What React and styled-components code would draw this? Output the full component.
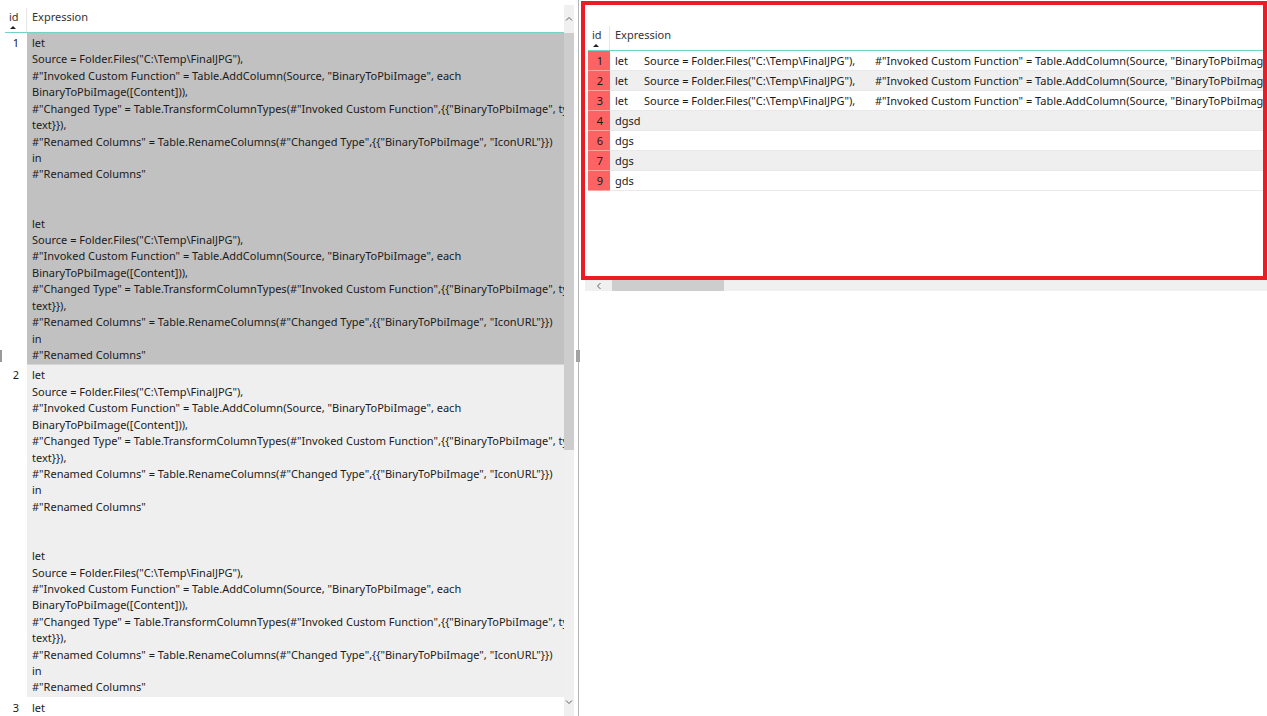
import React from 'react';
import styled, { createGlobalStyle } from 'styled-components';

const FONT = '"Noto Sans", "Open Sans", sans-serif';

const GlobalStyle = createGlobalStyle`
  html, body { margin: 0; padding: 0; background: #fff; }
  body { font-family: ${FONT}; font-size: 11px; color: #1b1b1b; }
  #root { width: 1267px; height: 716px; }
`;

const Page = styled.div`
  display: flex;
  width: 1267px;
  height: 716px;
  overflow: hidden;
  background: #fff;
`;

const LeftPane = styled.div`
  position: relative;
  display: flex;
  width: 574px;
  flex-shrink: 0;
  padding: 5px 0 0 5px;
  box-sizing: border-box;
`;

const EdgeMark = styled.div`
  position: absolute;
  left: 0;
  top: 350px;
  width: 2px;
  height: 12px;
  background: #9a9a9a;
`;

const Grid = styled.div`
  display: flex;
  flex-direction: column;
  width: ${(p) => p.$w || 'auto'};
  flex: ${(p) => (p.$w ? '0 0 auto' : '1 1 auto')};
  min-width: 0;
  overflow: hidden;
`;

const HeaderRow = styled.div`
  display: grid;
  grid-template-columns: 22px 1fr;
  height: 27px;
  flex-shrink: 0;
  border-bottom: 1px solid #72d3c6;
`;

const HeadCell = styled.div`
  display: flex;
  flex-direction: column;
  padding-left: ${(p) => p.$pl}px;
  border-right: ${(p) => (p.$divider ? '1px solid #e6e6e6' : 'none')};
  margin-top: ${(p) => (p.$divider ? '3px' : '0')};
  padding-top: ${(p) => (p.$divider ? '1px' : '4px')};
  color: #333;
  white-space: nowrap;
`;

const HeadLabel = styled.span`
  line-height: 16px;
  height: 16px;
`;

const SortArrow = styled.span`
  width: 0;
  height: 0;
  margin: 1px 0 0 1px;
  border-left: 3px solid transparent;
  border-right: 3px solid transparent;
  border-bottom: 3px solid #222;
`;

const Row = styled.div`
  display: grid;
  grid-template-columns: 22px 1fr;
  flex-shrink: 0;
`;

const IdCell = styled.div`
  text-align: right;
  padding: ${(p) => p.$pad};
  line-height: ${(p) => p.$lh};
  background: ${(p) => p.$bg};
  border-bottom: 1px solid ${(p) => p.$line};
`;

const ExprCell = styled.div`
  padding: ${(p) => p.$pad};
  line-height: ${(p) => p.$lh};
  background: ${(p) => p.$bg};
  border-bottom: 1px solid ${(p) => p.$line};
  white-space: pre;
  overflow: hidden;
  display: ${(p) => (p.$inline ? 'flex' : 'block')};
`;

const Seg = styled.span`
  flex: 0 0 ${(p) => (p.$w ? `${p.$w}px` : 'auto')};
  white-space: pre;
`;

const VScroll = styled.div`
  display: flex;
  flex-direction: column;
  width: 10px;
  flex-shrink: 0;
  background: #f0f0f0;
`;

const ScrollBtn = styled.div`
  display: flex;
  align-items: center;
  justify-content: center;
  flex-shrink: 0;
  width: ${(p) => (p.$w ? `${p.$w}px` : 'auto')};
  height: ${(p) => (p.$h ? `${p.$h}px` : 'auto')};
`;

const VThumb = styled.div`
  height: 417px;
  background: #cdcdcd;
  flex-shrink: 0;
`;

const Fill = styled.div`
  flex: 1 1 auto;
`;

const Splitter = styled.div`
  width: 7px;
  flex-shrink: 0;
  background: linear-gradient(
    to right,
    transparent 4px,
    #b4b4b4 4px,
    #b4b4b4 5px,
    transparent 5px
  );
`;

const Grip = styled.div`
  width: 4px;
  height: 12px;
  margin: 350px 0 0 2px;
  background: #a3a3a3;
`;

const RightPane = styled.div`
  display: flex;
  flex-direction: column;
  width: 686px;
  flex-shrink: 0;
`;

const HighlightBox = styled.div`
  display: flex;
  flex-direction: column;
  margin-top: 1px;
  height: 279px;
  box-sizing: border-box;
  border: 4px solid #ed1c24;
  padding: 18px 0 0 3px;
  overflow: hidden;
`;

const HScroll = styled.div`
  display: flex;
  align-items: stretch;
  height: 11px;
  margin-left: 4px;
  background: #f0f0f0;
`;

const HThumb = styled.div`
  width: 112px;
  background: #cdcdcd;
`;

const Chevron = ({ dir }) => {
  const pts = {
    up: '1,4.5 4,1.5 7,4.5',
    down: '1,1.5 4,4.5 7,1.5',
    left: '4.5,1 1.5,4 4.5,7',
  }[dir];
  const horiz = dir === 'left';
  return (
    <svg width={horiz ? 6 : 8} height={horiz ? 8 : 6} viewBox={horiz ? '0 0 6 8' : '0 0 8 6'}>
      <polyline points={pts} fill="none" stroke="#606060" strokeWidth="1" />
    </svg>
  );
};

const chunk = [
  'let',
  'Source = Folder.Files("C:\\Temp\\FinalJPG"),',
  '#"Invoked Custom Function" = Table.AddColumn(Source, "BinaryToPbiImage", each',
  'BinaryToPbiImage([Content])),',
  '#"Changed Type" = Table.TransformColumnTypes(#"Invoked Custom Function",{{"BinaryToPbiImage", type',
  'text}}),',
  '#"Renamed Columns" = Table.RenameColumns(#"Changed Type",{{"BinaryToPbiImage", "IconURL"}})',
  'in',
  '#"Renamed Columns"',
];
const fullText = [...chunk, '', '', ...chunk].join('\n');

const leftRows = [
  { id: 1, text: fullText, bg: '#c1c1c1', line: '#d6d6d6' },
  { id: 2, text: fullText, bg: '#efefef', line: '#ffffff' },
  { id: 3, text: fullText, bg: '#ffffff', line: '#ffffff' },
];

const invoked =
  '#"Invoked Custom Function" = Table.AddColumn(Source, "BinaryToPbiImage", each BinaryToPbiImage([Content])),';

const rightRows = [
  { id: 1, segs: ['let', 'Source = Folder.Files("C:\\Temp\\FinalJPG"),', invoked] },
  { id: 2, segs: ['let', 'Source = Folder.Files("C:\\Temp\\FinalJPG"),', invoked] },
  { id: 3, segs: ['let', 'Source = Folder.Files("C:\\Temp\\FinalJPG"),', invoked] },
  { id: 4, segs: ['dgsd'] },
  { id: 6, segs: ['dgs'] },
  { id: 7, segs: ['dgs'] },
  { id: 9, segs: ['gds'] },
];

const segWidths = [29, 231, 0];

const Header = () => (
  <HeaderRow>
    <HeadCell $pl={4} $divider>
      <HeadLabel>id</HeadLabel>
      <SortArrow />
    </HeadCell>
    <HeadCell $pl={5}>
      <HeadLabel>Expression</HeadLabel>
    </HeadCell>
  </HeaderRow>
);

export default function App() {
  return (
    <>
      <GlobalStyle />
      <Page>
        <LeftPane>
          <EdgeMark />
          <Grid $w="559px">
            <Header />
            {leftRows.map((r) => (
              <Row key={r.id}>
                <IdCell $pad="2px 8px 1px 0" $lh="16.42px" $bg="#fff" $line="#fff">
                  {r.id}
                </IdCell>
                <ExprCell $pad="2px 0 1px 5px" $lh="16.42px" $bg={r.bg} $line={r.line}>
                  {r.text}
                </ExprCell>
              </Row>
            ))}
          </Grid>
          <VScroll>
            <ScrollBtn $h={28}>
              <Chevron dir="up" />
            </ScrollBtn>
            <VThumb />
            <Fill />
            <ScrollBtn $h={28}>
              <Chevron dir="down" />
            </ScrollBtn>
          </VScroll>
        </LeftPane>

        <Splitter>
          <Grip />
        </Splitter>

        <RightPane>
          <HighlightBox>
            <Grid>
              <Header />
              {rightRows.map((r, i) => (
                <Row key={r.id}>
                  <IdCell $pad="0 7px 0 0" $lh="19px" $bg="#ff6262" $line="#ffa3a3">
                    {r.id}
                  </IdCell>
                  <ExprCell
                    $inline
                    $pad="0 0 0 5px"
                    $lh="19px"
                    $bg={i % 2 === 1 ? '#efefef' : '#ffffff'}
                    $line="#e9e9e9"
                  >
                    {r.segs.map((s, k) => (
                      <Seg key={k} $w={r.segs.length > 1 ? segWidths[k] : 0}>
                        {s}
                      </Seg>
                    ))}
                  </ExprCell>
                </Row>
              ))}
            </Grid>
          </HighlightBox>
          <HScroll>
            <ScrollBtn $w={27}>
              <Chevron dir="left" />
            </ScrollBtn>
            <HThumb />
          </HScroll>
        </RightPane>
      </Page>
    </>
  );
}
